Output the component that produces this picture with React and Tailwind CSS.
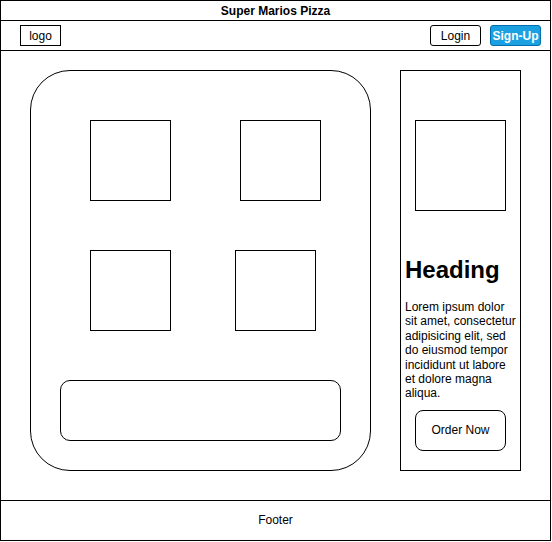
import React from "react";

export default function App() {
  const font = { fontFamily: '"Liberation Sans", Arial, Helvetica, sans-serif' };
  return (
    <div style={font} className="w-[551px] h-[541px] border border-black flex flex-col bg-white text-black">
      <div className="h-[20px] border-b border-black flex items-center justify-center text-[12px] font-bold">
        Super Marios Pizza
      </div>
      <div className="h-[30px] border-b border-black flex items-center pl-[19px] pr-[9px]">
        <div className="w-[41px] h-[21px] border border-black flex items-center justify-center text-[12px]">logo</div>
        <div className="flex-1" />
        <div className="w-[51px] h-[21px] border border-black rounded-[3px] flex items-center justify-center text-[12px]">Login</div>
        <div className="ml-[9px] w-[51px] h-[21px] border border-[#006eaf] bg-[#1ba1e2] rounded-[3px] flex items-center justify-center text-[12px] font-bold text-white">Sign-Up</div>
      </div>
      <div className="flex-1 flex pl-[29px] pt-[19px]">
        <div className="w-[341px] h-[401px] border border-black rounded-[40px] flex flex-col pt-[49px]">
          <div className="flex ml-[59px] gap-[69px]">
            <div className="w-[81px] h-[81px] border border-black" />
            <div className="w-[81px] h-[81px] border border-black" />
          </div>
          <div className="flex ml-[59px] gap-[64px] mt-[49px]">
            <div className="w-[81px] h-[81px] border border-black" />
            <div className="w-[81px] h-[81px] border border-black" />
          </div>
          <div className="ml-[29px] mt-[49px] w-[281px] h-[61px] border border-black rounded-[10px]" />
        </div>
        <div className="ml-[29px] w-[121px] h-[401px] border border-black flex flex-col">
          <div className="ml-[14px] mt-[49px] w-[91px] h-[91px] border border-black" />
          <div className="ml-[4px] mt-[45px] text-[24px] font-bold leading-[28px]">Heading</div>
          <div className="ml-[4px] mt-[16px] text-[12px] leading-[14.4px] whitespace-nowrap">
            Lorem ipsum dolor<br />sit amet, consectetur<br />adipisicing elit, sed<br />do eiusmod tempor<br />incididunt ut labore<br />et dolore magna<br />aliqua.
          </div>
          <div className="ml-[14px] mt-[9px] w-[91px] h-[41px] border border-black rounded-[8px] flex items-center justify-center text-[12px]">
            Order Now
          </div>
        </div>
      </div>
      <div className="h-[40px] border-t border-black flex items-center justify-center text-[12px] pb-[1px]">Footer</div>
    </div>
  );
}
